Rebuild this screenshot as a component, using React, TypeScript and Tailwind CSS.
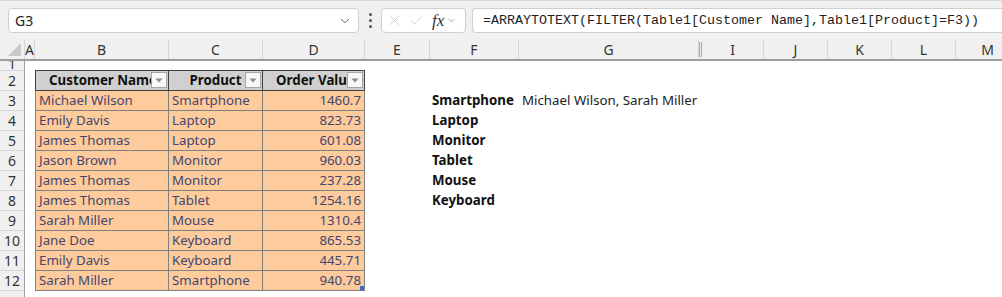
import { ChevronDown, X, Check } from 'lucide-react';

const cols = [
  { id: 'A', w: 10 },
  { id: 'B', w: 134 },
  { id: 'C', w: 94 },
  { id: 'D', w: 102 },
  { id: 'E', w: 65 },
  { id: 'F', w: 89 },
  { id: 'G', w: 180 },
  { id: 'H', w: 3 },
  { id: 'I', w: 62 },
  { id: 'J', w: 64 },
  { id: 'K', w: 64 },
  { id: 'L', w: 64 },
  { id: 'M', w: 64 },
];

const rows = [
  ['Michael Wilson', 'Smartphone', '1460.7'],
  ['Emily Davis', 'Laptop', '823.73'],
  ['James Thomas', 'Laptop', '601.08'],
  ['Jason Brown', 'Monitor', '960.03'],
  ['James Thomas', 'Monitor', '237.28'],
  ['James Thomas', 'Tablet', '1254.16'],
  ['Sarah Miller', 'Mouse', '1310.4'],
  ['Jane Doe', 'Keyboard', '865.53'],
  ['Emily Davis', 'Keyboard', '445.71'],
  ['Sarah Miller', 'Smartphone', '940.78'],
];

const products = ['Smartphone', 'Laptop', 'Monitor', 'Tablet', 'Mouse', 'Keyboard'];

function FilterButton() {
  return (
    <div className="absolute right-[1px] top-[1px] w-[16px] h-[16px] bg-[#f7f7f7] border border-[#a6a6a6] flex items-center justify-center">
      <svg width="8" height="5" viewBox="0 0 8 5">
        <path d="M0.5 0.5 L7.5 0.5 L4 4.5 Z" fill="#8a8a8a" />
      </svg>
    </div>
  );
}

function RowHeader({ n, h = 'h-[20px] items-center' }: { n: string; h?: string }) {
  return (
    <div className={`w-[25px] shrink-0 ${h} bg-[#f0f0f0] border-r border-[#9e9e9e] border-b border-b-[#d6d6d6] flex justify-center text-[14px] text-[#333] overflow-hidden`}>
      {n}
    </div>
  );
}

export default function App() {
  return (
    <div className="w-[1002px] h-[297px] overflow-hidden bg-white font-['Noto_Sans',sans-serif] text-[13.3px]">
      {/* Formula bar */}
      <div className="h-[40px] bg-[#f0f0f0] border-t border-[#d9d9d9] flex items-center gap-[6px] pl-[8px]">
        <div className="w-[351px] h-[25px] bg-white border border-[#cfcfcf] rounded-[4px] flex items-center justify-between px-[6px]">
          <span className="text-[14px] text-[#222]">G3</span>
          <ChevronDown className="w-[14px] h-[14px] text-[#444]" strokeWidth={1.5} />
        </div>
        <div className="w-[10px] flex flex-col items-center gap-[3px]">
          <div className="w-[3px] h-[3px] bg-[#555] rounded-full" />
          <div className="w-[3px] h-[3px] bg-[#555] rounded-full" />
          <div className="w-[3px] h-[3px] bg-[#555] rounded-full" />
        </div>
        <div className="w-[85px] h-[25px] bg-white border border-[#cfcfcf] rounded-[4px] flex items-center pl-[4px] gap-[5px]">
          <X className="w-[17px] h-[17px] text-[#c4c4c4]" strokeWidth={1.1} />
          <Check className="w-[17px] h-[17px] text-[#c4c4c4]" strokeWidth={1.1} />
          <span className="font-['Liberation_Serif',serif] italic text-[17px] text-[#333] leading-none ml-[2px]">fx</span>
          <ChevronDown className="w-[11px] h-[11px] text-[#888] -ml-[3px]" strokeWidth={1.5} />
        </div>
        <div className="flex-1 h-[25px] bg-white border border-[#cfcfcf] rounded-l-[4px] border-r-0 flex items-center pl-[10px] font-['Liberation_Mono',monospace] text-[13.33px] text-[#222]">
          =ARRAYTOTEXT(FILTER(Table1[Customer Name],Table1[Product]=F3))
        </div>
      </div>

      {/* Column headers */}
      <div className="flex h-[21px] bg-[#f0f0f0] border-b-2 border-[#9e9e9e]">
        <div className="w-[25px] shrink-0 relative border-r border-[#d6d6d6]">
          <svg className="absolute right-[3px] bottom-[3px]" width="13" height="13" viewBox="0 0 13 13">
            <path d="M13 0 L13 13 L0 13 Z" fill="#c8c8c8" />
          </svg>
        </div>
        {cols.map((c) =>
          c.id === 'H' ? (
            <div key={c.id} className="w-[3px] shrink-0 border-x border-[#a8a8a8] my-[2px]" />
          ) : (
            <div
              key={c.id}
              style={{ width: c.w }}
              className="shrink-0 border-r border-[#d6d6d6] flex items-center justify-center text-[14px] text-[#333]"
            >
              {c.id}
            </div>
          )
        )}
      </div>

      {/* Row 1 */}
      <div className="flex">
        <RowHeader n="1" h="h-[10px] items-start leading-[6px]" />
      </div>

      {/* Row 2: table header */}
      <div className="flex">
        <RowHeader n="2" />
        <div className="w-[10px] shrink-0" />
        <div className="flex border border-[#404040] bg-[#d0d0d0] font-bold text-[#111] -mt-[1px] h-[21px]">
          <div className="relative w-[133px] border-r border-[#404040] flex items-center justify-center overflow-hidden pl-[2px]">
            <span className="whitespace-nowrap">Customer Name</span>
            <FilterButton />
          </div>
          <div className="relative w-[94px] border-r border-[#404040] flex items-center justify-center overflow-hidden">
            <span>Product</span>
            <FilterButton />
          </div>
          <div className="relative w-[101px] flex items-center justify-center overflow-hidden pl-[4px]">
            <span className="whitespace-nowrap">Order Value</span>
            <FilterButton />
          </div>
        </div>
      </div>

      {/* Data rows */}
      {rows.map((r, i) => (
        <div key={i} className="flex">
          <RowHeader n={String(i + 3)} />
          <div className="w-[10px] shrink-0" />
          <div className="relative flex h-[20px] bg-[#fecb9d] text-[#45466c] border-x border-b border-[#808080]">
            <div className="w-[133px] border-r border-[#808080] flex items-center pl-[3px] whitespace-nowrap">{r[0]}</div>
            <div className="w-[94px] border-r border-[#808080] flex items-center pl-[3px] whitespace-nowrap">{r[1]}</div>
            <div className="w-[101px] flex items-center justify-end pr-[3px]">{r[2]}</div>
            {i === rows.length - 1 && (
              <div className="absolute right-[0px] bottom-[0px] w-[4px] h-[4px] bg-[#3b6ad8]" />
            )}
          </div>
          <div className="w-[65px] shrink-0" />
          <div className="w-[89px] shrink-0 flex items-center pl-[2px] font-bold text-[#111] h-[20px] whitespace-nowrap">
            {products[i] ?? ''}
          </div>
          <div className="flex items-center pl-[3px] h-[20px] text-[#222] whitespace-nowrap">
            {i === 0 ? 'Michael Wilson, Sarah Miller' : ''}
          </div>
        </div>
      ))}
      <div className="flex">
        <RowHeader n="" />
      </div>
    </div>
  );
}
